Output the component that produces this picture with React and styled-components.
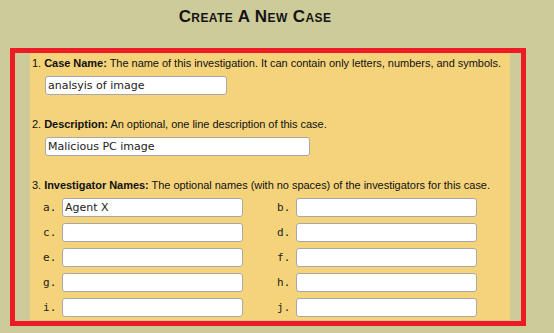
import React from "react"
import styled, { createGlobalStyle } from 'styled-components'

const GlobalStyle = createGlobalStyle`
  html, body {
    margin: 0;
    padding: 0;
    background: #cdcb99;
  }
  body {
    font-family: "Liberation Sans", Arial, sans-serif;
    color: #111;
  }
`;

const Title = styled.h1`
  margin: 0;
  padding: 7px 44px 0 0;
  height: 40px;
  box-sizing: border-box;
  text-align: center;
  font-family: "Liberation Sans", Arial, sans-serif;
  font-variant: small-caps;
  font-weight: bold;
  font-size: 17px;
  letter-spacing: 0.4px;
  line-height: 20px;
  color: #141414;
`;

const Frame = styled.div`
  margin: 8px 0 0 10px;
  width: 516px;
  box-sizing: border-box;
  border: 5px solid #ed1c24;
  padding: 0 11px 1px 15px;
`;

const Panel = styled.div`
  background: #f4d37b;
  padding: 3px 0 3px 2px;
`;

const Item = styled.div`
  & + & {
    margin-top: 22px;
  }
`;

const Prompt = styled.p`
  margin: 0;
  font-size: 11px;
  letter-spacing: -0.03px;
  line-height: 14px;
  b {
    font-weight: bold;
  }
`;

const TextField = styled.input`
  display: block;
  box-sizing: border-box;
  margin: 6px 0 0 13px;
  width: ${p => p.$w}px;
  height: 19px;
  padding: 0 2px;
  border: 1px solid #a8a8a8;
  border-radius: 3px;
  background: #fff;
  font-family: "DejaVu Sans", sans-serif;
  font-size: 11px;
  color: #222;
  outline: none;
`;

const NameGrid = styled.div`
  display: grid;
  grid-template-columns: 200px 200px;
  column-gap: 34px;
  row-gap: 6px;
  margin: 6px 0 0 11px;
`;

const NameCell = styled.label`
  display: flex;
  align-items: center;
`;

const Letter = styled.span`
  width: 19px;
  font-family: "DejaVu Sans Mono", monospace;
  font-size: 11px;
  color: #222;
`;

const NameInput = styled(TextField)`
  margin: 0;
  width: 181px;
`;

const names = { a: 'Agent X' };
const letters = ['a', 'b', 'c', 'd', 'e', 'f', 'g', 'h', 'i', 'j'];

export default function App() {
  return (
    <>
      <GlobalStyle />
      <Title>Create A New Case</Title>
      <Frame>
        <Panel>
          <Item>
            <Prompt>1. <b>Case Name:</b> The name of this investigation. It can contain only letters, numbers, and symbols.</Prompt>
            <TextField $w={182} defaultValue="analsyis of image" />
          </Item>
          <Item>
            <Prompt>2. <b>Description:</b> An optional, one line description of this case.</Prompt>
            <TextField $w={265} defaultValue="Malicious PC image" />
          </Item>
          <Item>
            <Prompt>3. <b>Investigator Names:</b> The optional names (with no spaces) of the investigators for this case.</Prompt>
            <NameGrid>
              {letters.map(l => (
                <NameCell key={l}>
                  <Letter>{l}.</Letter>
                  <NameInput defaultValue={names[l] || ''} />
                </NameCell>
              ))}
            </NameGrid>
          </Item>
        </Panel>
      </Frame>
    </>
  )
}
